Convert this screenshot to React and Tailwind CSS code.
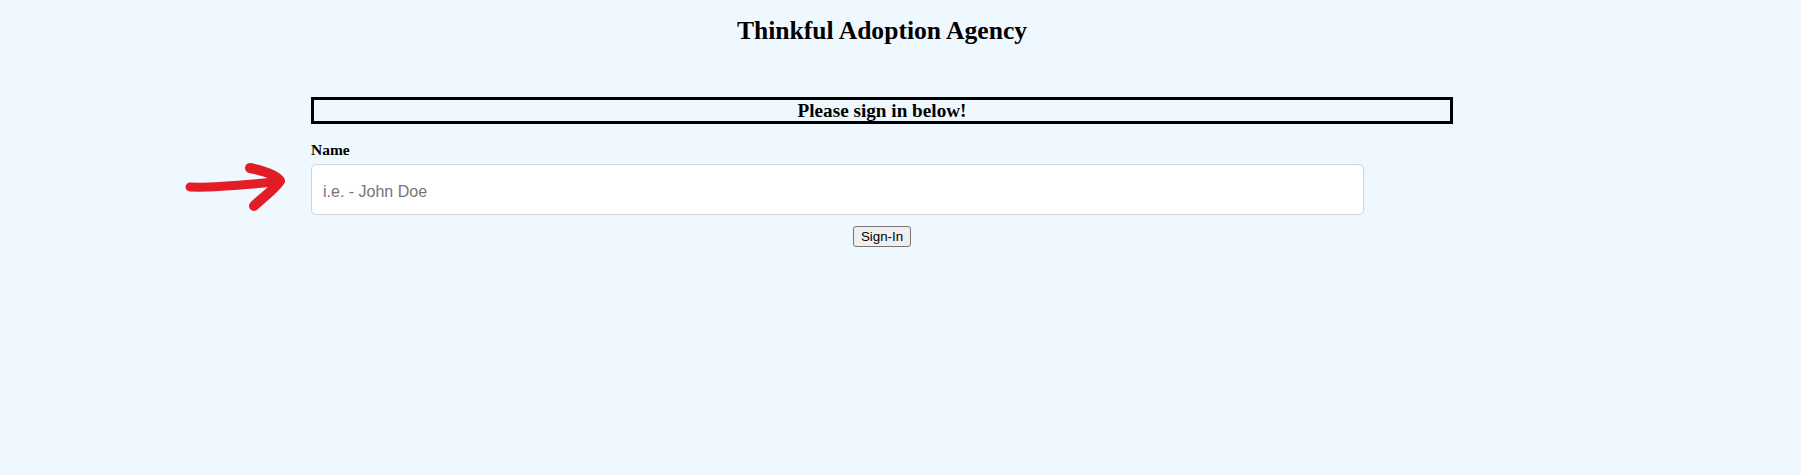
import React, { useState } from "react";

const serif = "font-['Liberation_Serif','Times_New_Roman',serif]";
const sans = "font-['Liberation_Sans',Arial,sans-serif]";

function ArrowMark() {
  return (
    <svg
      className="absolute left-[-127px] top-[-4px] pointer-events-none"
      width="104"
      height="53"
      viewBox="0 0 104 53"
      fill="none"
      aria-hidden
    >
      <path
        d="M6 27 C 30 28, 60 25, 90 22"
        stroke="#e31d25"
        strokeWidth={9}
        strokeLinecap="round"
      />
      <path
        d="M66 8 C 80 11, 93 15, 96 21 C 90 30, 78 38, 70 46"
        stroke="#e31d25"
        strokeWidth={10}
        strokeLinecap="round"
        strokeLinejoin="round"
      />
    </svg>
  );
}

export default function App() {
  const [name, setName] = useState("");

  return (
    <div className="min-h-screen w-full bg-[#f0f8ff] text-black">
      <div className="ml-[311px] w-[1142px]">
        <h1
          className={`${serif} pt-[16px] text-center text-[25.6px] leading-[30px] font-bold`}
        >
          Thinkful Adoption Agency
        </h1>

        <div
          className={`${serif} mt-[51px] border-[3px] border-black text-center text-[19.2px] leading-[21px] font-bold`}
        >
          Please sign in below!
        </div>

        <form onSubmit={(e) => e.preventDefault()} className="flex flex-col">
          <label
            htmlFor="name"
            className={`${serif} mt-[17px] text-[15.5px] leading-[18px] font-bold`}
          >
            Name
          </label>
          <div className="relative mt-[5px] w-[1053px]">
            <ArrowMark />
            <input
              id="name"
              type="text"
              value={name}
              onChange={(e) => setName(e.target.value)}
              placeholder="i.e. - John Doe"
              className={`${sans} block h-[51px] w-full rounded-[5px] border border-[#ced4da] bg-white pl-[11px] pt-[4px] text-[16px] text-[#495057] outline-none placeholder:text-[#757575]`}
            />
          </div>
          <div className="mt-[11px] flex justify-center">
            <button
              type="submit"
              className={`${sans} h-[21px] rounded-[3px] border border-[#767676] bg-[#efefef] px-[7px] text-[13.33px] leading-[15px] text-black`}
            >
              Sign-In
            </button>
          </div>
        </form>
      </div>
    </div>
  );
}
